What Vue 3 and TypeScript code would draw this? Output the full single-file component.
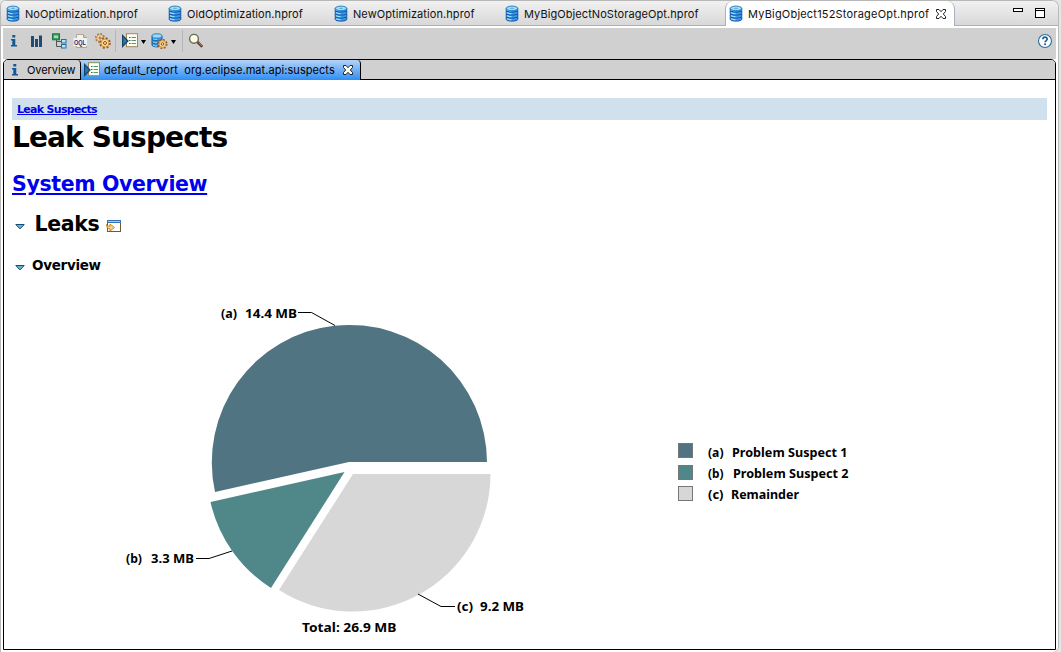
<script setup lang="ts">
interface EditorTab {
  name: string
  width: number
  active?: boolean
}

interface Slice {
  key: string
  color: string
  path: string
  leader: string
  value: string
  valueX: number
  valueWidth: number
  x: number
  y: number
}

interface LegendRow {
  key: string
  color: string
  label: string
  x: number
  width: number
  boxY: number
  baseline: number
}

const tabs: EditorTab[] = [
  { name: 'NoOptimization.hprof', width: 162 },
  { name: 'OldOptimization.hprof', width: 166 },
  { name: 'NewOptimization.hprof', width: 171 },
  { name: 'MyBigObjectNoStorageOpt.hprof', width: 225 },
  { name: 'MyBigObject152StorageOpt.hprof', width: 230, active: true },
]

const discs = [11.5, 8.5, 5.5, 2.5]

const slices: Slice[] = [
  {
    key: '(a)',
    color: '#507482',
    path: 'M349 462H487A137.6 137.6 0 1 0 215 492Z',
    leader: '298,312.5 311.5,312.5 335,325.5',
    value: '14.4 MB',
    valueX: 245,
    valueWidth: 52,
    x: 221,
    y: 318,
  },
  {
    key: '(b)',
    color: '#508788',
    path: 'M344.5 472L210.5 502A137.6 137.6 0 0 0 271 588Z',
    leader: '196,558.5 209,558.5 232,551',
    value: '3.3 MB',
    valueX: 151,
    valueWidth: 43,
    x: 126,
    y: 563,
  },
  {
    key: '(c)',
    color: '#d7d7d7',
    path: 'M353 474H490.5A137.6 137.6 0 0 1 279 590Z',
    leader: '418,594 441,606.5 455,606.5',
    value: '9.2 MB',
    valueX: 480,
    valueWidth: 44,
    x: 457,
    y: 611,
  },
]

const legend: LegendRow[] = [
  { key: '(a)', color: '#507482', label: 'Problem Suspect 1', x: 732, width: 115.5, boxY: 443.5, baseline: 457 },
  { key: '(b)', color: '#508788', label: 'Problem Suspect 2', x: 733, width: 115.5, boxY: 465.5, baseline: 478 },
  { key: '(c)', color: '#d7d7d7', label: 'Remainder', x: 731, width: 68, boxY: 486.5, baseline: 499 },
]
</script>

<template>
  <div class="window">
    <div class="pane">
      <header class="tabs">
        <div
          v-for="tab in tabs"
          :key="tab.name"
          class="tab"
          :class="{ active: tab.active }"
          :style="{ width: tab.width + 'px' }"
        >
          <svg class="db" width="14" height="18" viewBox="0 0 14 18">
            <g v-for="d in discs" :key="d">
              <path :d="`M1.2 ${d + 0.6}v2.2c0 2.4 11.6 2.4 11.6 0v-2.2z`" fill="#3f9be6" stroke="#0d52a8" stroke-width="1" />
              <path :d="`M2 ${d + 2}c1 1 3 1.2 4.500 1.200`" fill="none" stroke="#9bdcfa" stroke-width="1.3" />
            </g>
            <ellipse cx="7" cy="3.400" rx="5.700" ry="2.300" fill="#9fdcf5" stroke="#2c83c4" stroke-width="1" />
            <ellipse cx="7" cy="3.400" rx="2" ry="0.700" fill="#5eb1de" />
          </svg>
          <span class="tab-name">{{ tab.name }}</span>
          <svg v-if="tab.active" class="close" width="12" height="12" viewBox="0 0 12 12">
            <path d="M1.500 1.500h2.500l2 2.200 2-2.200h2.500v2L8.300 6l2.200 2.500v2H8L6 8.300l-2 2.200H1.500v-2L3.700 6 1.500 3.500z" fill="#fff" stroke="#222" />
          </svg>
        </div>
        <div class="window-buttons">
          <svg width="32" height="12" viewBox="0 0 32 12">
            <rect x="0.500" y="1.500" width="9" height="3" fill="#fff" stroke="#000" />
            <rect x="22.500" y="1.500" width="9" height="9" fill="#fff" stroke="#000" />
            <path d="M22 3.500h10" stroke="#000" />
          </svg>
        </div>
      </header>

      <div class="toolbar">
        <svg class="icon" width="16" height="16" viewBox="0 0 16 16">
          <path d="M6.300 2h3v2.500h-3zM5 6h4.300v6H11v1.500H5V12h1.300V7.500H5z" fill="#125a96" />
        </svg>
        <svg class="icon bars" width="16" height="16" viewBox="0 0 16 16">
          <path d="M3 3h3v11H3zM7 6h3v8H7zM11 2.500h3V14h-3z" fill="#234a76" />
        </svg>
        <svg class="icon tree" width="16" height="16" viewBox="0 0 16 16">
          <path d="M5.500 7v6.500h5M5.500 8.500h5" fill="none" stroke="#555" />
          <rect x="1.500" y="0.800" width="7" height="6" fill="#3a9d63" stroke="#1d7546" />
          <path d="M3 2.500h4v2.500H3z" fill="#a5deb3" />
          <rect x="10.500" y="6.500" width="4.500" height="3.500" fill="#b5e5f5" stroke="#2270a8" />
          <rect x="10.500" y="11.500" width="4.500" height="3.500" fill="#b5e5f5" stroke="#2270a8" />
        </svg>
        <svg class="icon oql" width="16" height="16" viewBox="0 0 16 16">
          <path d="M3.500 1.500h7l3 3v10h-10z" fill="#f5f2e8" stroke="#b0a78d" />
          <path d="M10.500 1.500v3h3" fill="#ddcda0" stroke="#b0a060" />
          <rect x="0.500" y="5" width="13.500" height="8" fill="#f1f1f5" />
          <text x="1" y="11.500" textLength="12" lengthAdjust="spacingAndGlyphs" class="oql-text">OQL</text>
        </svg>
        <svg class="icon gears" width="17" height="16" viewBox="0 0 17 16">
          <circle cx="6" cy="5" r="4" fill="#f7d79a" stroke="#a4754a" stroke-width="2" stroke-dasharray="1.700 1.400" />
          <circle cx="6" cy="5" r="3.300" fill="#f8e3b6" stroke="#c09050" stroke-width=".8" />
          <circle cx="6" cy="5" r="1.200" fill="#d0d0d0" stroke="#8f5b2d" stroke-width=".8" />
          <circle cx="11" cy="10" r="4.800" fill="#f7d79a" stroke="#96562a" stroke-width="2" stroke-dasharray="2 1.770" />
          <circle cx="11" cy="10" r="4" fill="#fbd98a" stroke="#c68436" stroke-width=".8" />
          <circle cx="11" cy="10" r="1.500" fill="#eee" stroke="#8f4b1d" />
        </svg>
        <i class="separator"></i>
        <svg class="icon report" width="16" height="16" viewBox="0 0 16 16">
          <rect x="4.500" y="0.700" width="11" height="13" fill="#fffef4" stroke="#9b8a58" />
          <path d="M7 4.500h1.500M7 7.500h1.500M7 10.500h1.500" stroke="#287047" stroke-width="1.200" />
          <path d="M9.500 4.500H14M9.500 7.500H14M9.500 10.500H14" stroke="#49a06b" stroke-width="1.200" />
          <path d="M0.600 2.500v11L6 8z" fill="#2f7896" stroke="#16436f" stroke-width="1.200" />
        </svg>
        <svg class="caret" width="5" height="4" viewBox="0 0 5 4"><path d="M0 0h5L2.500 4z" /></svg>
        <svg class="icon dbgear" width="17" height="17" viewBox="0 0 17 17">
          <path d="M1 3v9c0 2.500 10 2.500 10 0V3z" fill="#3f9ade" stroke="#1261a8" />
          <path d="M1 6c0 2.500 10 2.500 10 0M1 9c0 2.500 10 2.500 10 0" fill="none" stroke="#1261a8" />
          <path d="M2 5.500c1 .8 2 1 4 1M2 8.700c1 .8 2 1 4 1M2 12c1 .8 2 1 4 1" fill="none" stroke="#a3daf5" />
          <ellipse cx="6" cy="3" rx="5" ry="2.200" fill="#9ed9f3" stroke="#2c7fba" />
          <circle cx="11.500" cy="11" r="4.200" fill="#f7d79a" stroke="#96562a" stroke-width="1.800" stroke-dasharray="1.800 1.500" />
          <circle cx="11.500" cy="11" r="3.500" fill="#fbd98a" stroke="#c68436" stroke-width=".8" />
          <circle cx="11.500" cy="11" r="1.300" fill="#eee" stroke="#8f4b1d" />
        </svg>
        <svg class="caret" width="5" height="4" viewBox="0 0 5 4"><path d="M0 0h5L2.500 4z" /></svg>
        <i class="separator second"></i>
        <svg class="icon search" width="16" height="16" viewBox="0 0 16 16">
          <path d="M9.500 9l4.800 4.800" stroke="#5c3b30" stroke-width="2.600" />
          <path d="M10.500 9.500l4 4" stroke="#b98b78" stroke-width="0.800" />
          <circle cx="6" cy="5.800" r="4.400" fill="#fbfbdf" stroke="#68685a" stroke-width="1.400" />
          <path d="M3.500 6c0-1.500 1-2.500 2.500-2.500" fill="none" stroke="#fff" />
        </svg>
        <svg class="help" width="16" height="16" viewBox="0 0 16 16">
          <circle cx="8" cy="8" r="6.500" fill="#fafdff" stroke="#2c6d9b" stroke-width="1.100" />
          <path d="M5.900 6.200c0-2.700 4.300-2.700 4.300-.1 0 1.500-2.100 1.500-2.100 3.200" fill="none" stroke="#1c5c94" stroke-width="1.700" />
          <rect x="7.200" y="10.400" width="1.800" height="1.700" fill="#1c5c94" />
        </svg>
      </div>

      <section class="editor">
        <nav class="subtabs">
          <div class="subtab">
            <svg width="16" height="16" viewBox="0 0 16 16">
              <path d="M6.300 2h3v2.500h-3zM5 6h4.300v6H11v1.500H5V12h1.300V7.500H5z" fill="#125a96" />
            </svg>
            <span class="overview-name">Overview</span>
          </div>
          <div class="subtab selected">
            <svg width="16" height="16" viewBox="0 0 16 16">
              <rect x="4.500" y="0.700" width="11" height="13" fill="#fffef4" stroke="#9b8a58" />
              <path d="M7 4.500h1.500M7 7.500h1.500M7 10.500h1.500" stroke="#287047" stroke-width="1.200" />
              <path d="M9.500 4.500H14M9.500 7.500H14M9.500 10.500H14" stroke="#49a06b" stroke-width="1.200" />
              <path d="M0.600 2.500v11L6 8z" fill="#2f7896" stroke="#16436f" stroke-width="1.200" />
            </svg>
            <span class="report-name">default_report&nbsp; org.eclipse.mat.api:suspects</span>
            <svg class="subclose" width="12" height="12" viewBox="0 0 12 12">
              <path d="M1.500 1.500h2.500l2 2.200 2-2.200h2.500v2L8.300 6l2.200 2.500v2H8L6 8.300l-2 2.200H1.500v-2L3.700 6 1.500 3.500z" fill="#fffff0" stroke="#222" />
            </svg>
          </div>
        </nav>

        <main class="report-body">
          <div class="crumbs"><a>Leak Suspects</a></div>
          <h1>Leak Suspects</h1>
          <h2 class="system"><a>System Overview</a></h2>
          <h2 class="leaks">
            <svg class="twisty" width="10" height="6" viewBox="0 0 10 6"><path d="M0.800 0.500h8.400L5 4.900z" fill="#62bac4" stroke="#174a7c" /></svg>
            <span>Leaks</span>
            <svg class="open" width="15" height="12" viewBox="0 0 15 12">
              <rect x="1.500" y="0.500" width="13" height="11" fill="#fff" stroke="#6b5c37" />
              <path d="M1 0h14v3H1z" fill="#3474b5" />
              <path d="M2 1.500h12" stroke="#9fc9ee" />
              <path d="M0.600 4.500c0 1.500.8 1.700 3.400 1.700V4l4.500 3.500L4 11V8.800C1.500 8.800.6 7.500.6 4.500z" fill="#fbd283" stroke="#c57a20" stroke-width=".9" />
            </svg>
          </h2>
          <h3>
            <svg class="twisty" width="10" height="6" viewBox="0 0 10 6"><path d="M0.800 0.500h8.400L5 4.900z" fill="#62bac4" stroke="#174a7c" /></svg>
            <span>Overview</span>
          </h3>
          <svg class="chart" width="1051" height="364" viewBox="4 285 1051 364">
            <g v-for="s in slices" :key="s.key">
              <path :d="s.path" :fill="s.color" />
              <polyline :points="s.leader" fill="none" stroke="#000" />
              <text :x="s.x" :y="s.y" textLength="16" lengthAdjust="spacingAndGlyphs">{{ s.key }}</text>
              <text :x="s.valueX" :y="s.y" :textLength="s.valueWidth" lengthAdjust="spacingAndGlyphs">{{ s.value }}</text>
            </g>
            <text x="302" y="632" textLength="94.500" lengthAdjust="spacingAndGlyphs">Total: 26.9 MB</text>
            <g v-for="row in legend" :key="row.label">
              <rect x="678.500" :y="row.boxY" width="14" height="14" :fill="row.color" stroke="#777" />
              <text x="708" :y="row.baseline" textLength="15.500" lengthAdjust="spacingAndGlyphs">{{ row.key }}</text>
              <text :x="row.x" :y="row.baseline" :textLength="row.width" lengthAdjust="spacingAndGlyphs">{{ row.label }}</text>
            </g>
          </svg>
        </main>
      </section>
    </div>
  </div>
</template>

<style>
body {
  background: #e6e6e6;
}
</style>

<style scoped>
.window {
  box-sizing: border-box;
  width: 1061px;
  height: 652px;
  padding-right: 2px;
  background: #e6e6e6;
  overflow: hidden;
  font-family: Inter, "Liberation Sans", sans-serif;
}
.pane {
  box-sizing: border-box;
  width: 1059px;
  height: 652px;
  border: 1px solid #b8b8b8;
  border-bottom: 0;
  border-radius: 6px 7px 6px 0;
  background: #fff;
  overflow: hidden;
}
.tabs {
  box-sizing: border-box;
  display: flex;
  height: 25px;
  border-bottom: 1px solid #a9b3bd;
  background: linear-gradient(#f1f1f1, #d8d8d8);
}
.tab {
  box-sizing: border-box;
  display: flex;
  flex: none;
  align-items: center;
  height: 25px;
  padding: 0 0 0 5px;
  font-size: 11px;
  white-space: nowrap;
  color: #111;
}
.tab.active {
  border: 1px solid #a9b1c4;
  border-width: 0 1px;
  border-radius: 8px 8px 0 0;
  background: #fff;
  padding-left: 3px;
}
.db {
  flex: none;
}
.tab-name {
  margin-left: 5px;
  letter-spacing: 0.08px;
}
.active .tab-name {
  letter-spacing: 0.2px;
}
.close {
  margin-left: 6px;
}
.window-buttons {
  margin-left: auto;
  padding: 6px 13px 0 0;
}
.window-buttons svg {
  display: block;
}
.toolbar {
  display: flex;
  align-items: flex-start;
  height: 31px;
  margin: 2px 2px 0;
  padding: 5px 3px 0 3px;
  box-sizing: border-box;
  background: #d0d0d0;
}
.toolbar svg {
  flex: none;
  display: block;
}
.bars {
  margin-left: 6px;
}
.tree {
  margin-left: 7px;
}
.oql {
  margin-left: 6px;
  overflow: visible;
}
.oql-text {
  font: bold 7px "Liberation Sans", sans-serif;
  fill: #302767;
}
.gears {
  margin-left: 5px;
}
.separator {
  width: 1px;
  height: 22px;
  margin: -3px 5px 0 4px;
  background: #b6b6b6;
}
.report {
  margin-left: 1px;
}
.caret {
  margin: 7px 0 0 3px;
}
.dbgear {
  margin-left: 5px;
}
.separator.second {
  margin-left: 6px;
}
.help {
  margin-left: auto;
}
.editor {
  box-sizing: border-box;
  width: 1053px;
  height: 591px;
  margin-left: 2px;
  border: 1px solid #000;
  border-radius: 5px 5px 0 0;
  background: #fff;
  overflow: hidden;
}
.subtabs {
  box-sizing: border-box;
  display: flex;
  height: 20px;
  border-bottom: 1px solid #000;
  background: #d0d0d0;
}
.subtab {
  box-sizing: border-box;
  display: flex;
  align-items: center;
  width: 77px;
  height: 19px;
  padding-left: 3px;
  border-right: 1px solid #000;
  border-radius: 0 4px 0 0;
  font-size: 11px;
  white-space: nowrap;
}
.subtab.selected {
  width: 280px;
  height: 20px;
  border-radius: 0 4px 0 0;
  background: linear-gradient(#b3d3f8, #2e8ef6);
}
.overview-name {
  margin-left: 4px;
  letter-spacing: -0.08px;
}
.report-name {
  margin-left: 4px;
  letter-spacing: 0.06px;
}
.subclose {
  margin-left: 7px;
}
.report-body {
  height: 569px;
  font-family: "DejaVu Sans", sans-serif;
  font-weight: bold;
}
.report-body a {
  color: #0000ee;
  text-decoration: underline;
}
.crumbs {
  box-sizing: border-box;
  height: 22px;
  margin: 18px 8px 0;
  padding-left: 5px;
  background: #d1e0ed;
  font-size: 11px;
  line-height: 24px;
  letter-spacing: -0.7px;
}
h1,
h2,
h3 {
  margin: 0 0 0 8px;
  white-space: nowrap;
}
h1 {
  height: 44px;
  font-size: 28px;
  line-height: 36px;
  letter-spacing: -0.87px;
}
h2 {
  height: 40px;
  font-size: 20.500px;
  line-height: 40px;
  letter-spacing: -0.36px;
}
.leaks,
h3 {
  display: flex;
  align-items: center;
  padding-left: 3px;
}
.leaks span {
  margin-left: 9.500px;
}
.open {
  margin: 4px 0 0 6.500px;
}
.twisty {
  flex: none;
  margin-top: 5px;
}
h3 {
  height: 39px;
  margin-top: 2px;
  font-size: 13.500px;
  line-height: 41px;
}
h3 span {
  margin-left: 7px;
  letter-spacing: -0.3px;
}
.chart {
  display: block;
}
.chart text {
  font: bold 13px "Noto Sans", "Open Sans", sans-serif;
  fill: #000;
}
</style>
